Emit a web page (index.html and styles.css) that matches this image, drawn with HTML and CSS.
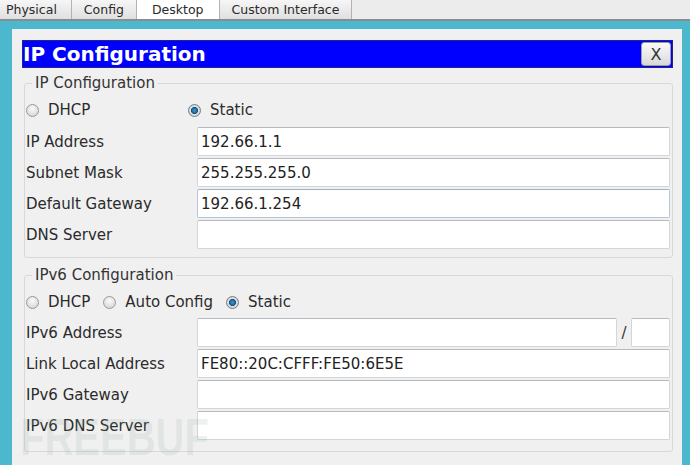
FILE: index.html
```html
<!DOCTYPE html>
<html lang="en">
<head>
  <meta charset="UTF-8">
  <title>IP Configuration</title>
  <link rel="stylesheet" href="styles.css">
</head>
<body>
  <div class="tabs">
    <div class="tab tab-first">Physical</div>
    <div class="tab">Config</div>
    <div class="tab active">Desktop</div>
    <div class="tab">Custom Interface</div>
  </div>

  <div class="panel">
    <div class="title-bar">
      <span class="title">IP Configuration</span>
      <button class="close-btn">X</button>
    </div>

    <!-- IPv4 -->
    <fieldset class="group group-v4">
      <legend>IP Configuration</legend>
      <div class="radio-row wide">
        <label class="radio"><span class="dot"></span>DHCP</label>
        <label class="radio"><span class="dot checked"></span>Static</label>
      </div>
      <div class="field-row">
        <span class="label">IP Address</span>
        <input class="field" type="text" value="192.66.1.1">
      </div>
      <div class="field-row">
        <span class="label">Subnet Mask</span>
        <input class="field" type="text" value="255.255.255.0">
      </div>
      <div class="field-row">
        <span class="label">Default Gateway</span>
        <input class="field focused" type="text" value="192.66.1.254">
      </div>
      <div class="field-row">
        <span class="label">DNS Server</span>
        <input class="field" type="text" value="">
      </div>
    </fieldset>

    <!-- IPv6 -->
    <fieldset class="group group-v6">
      <legend>IPv6 Configuration</legend>
      <div class="radio-row">
        <label class="radio"><span class="dot"></span>DHCP</label>
        <label class="radio"><span class="dot"></span>Auto Config</label>
        <label class="radio"><span class="dot checked"></span>Static</label>
      </div>
      <div class="field-row">
        <span class="label">IPv6 Address</span>
        <input class="field" type="text" value="">
        <span class="slash">/</span>
        <input class="field prefix" type="text" value="">
      </div>
      <div class="field-row">
        <span class="label">Link Local Address</span>
        <input class="field" type="text" value="FE80::20C:CFFF:FE50:6E5E">
      </div>
      <div class="field-row">
        <span class="label">IPv6 Gateway</span>
        <input class="field" type="text" value="">
      </div>
      <div class="field-row">
        <span class="label">IPv6 DNS Server</span>
        <input class="field" type="text" value="">
      </div>
    </fieldset>
  </div>

  <div class="watermark">FREEBUF</div>
</body>
</html>
```

FILE: styles.css
```css
body {
  margin: 0;
  width: 690px;
  height: 465px;
  overflow: hidden;
  position: relative;
  background-color: #4cb8cd;
  font-family: "DejaVu Sans", Verdana, sans-serif;
  color: #2b2b2b;
}

/* Tabs */
.tabs {
  display: flex;
  height: 19px;
  background-color: #ececec;
  border-bottom: 2px solid #8c8c8c;
}

.tab {
  padding: 0 12px;
  font-size: 12.5px;
  line-height: 19px;
  color: #2a2a2a;
  background: linear-gradient(#f6f6f6, #e0e0e0);
  border-right: 1px solid #b3b3b3;
}

.tab-first {
  padding-left: 6px;
  padding-right: 14px;
}

.tab.active {
  background: #fff;
  padding: 0 15px;
}

/* Main panel */
.panel {
  margin: 8px 8px 0 12px;
  height: 436px;
  box-sizing: border-box;
  padding: 11px 9px 0 10px;
  background-color: #f0f0f0;
}

.title-bar {
  display: flex;
  align-items: center;
  justify-content: space-between;
  height: 28px;
  box-sizing: border-box;
  background-color: #0000fe;
  border: 1px solid #23238a;
}

.title {
  color: #fff;
  font-weight: bold;
  font-size: 20px;
  line-height: 26px;
}

.close-btn {
  width: 30px;
  height: 24px;
  margin-right: 1px;
  padding: 0;
  font-family: "DejaVu Sans", sans-serif;
  font-size: 16px;
  color: #333;
  background: linear-gradient(#fbfbfb, #d9d9d9);
  border: 1px solid #9c9c9c;
  border-radius: 3px;
}

/* Group boxes */
.group {
  margin: 6px 0 0 2px;
  min-width: 0;
  border: 1px solid #d8d8d8;
  border-radius: 3px;
  padding: 6px 2px 8px 1px;
}

.group-v6 {
  margin-top: 8px;
  padding-bottom: 11px;
}

.group legend {
  margin-left: 6px;
  padding: 0 3px;
  font-size: 15px;
  line-height: 18px;
  color: #333;
}

.radio-row {
  display: flex;
  align-items: center;
  height: 24px;
  margin-bottom: 5px;
  font-size: 15px;
}

.group-v6 .radio-row {
  margin-bottom: 4px;
}

.radio {
  display: flex;
  align-items: center;
  gap: 9px;
  margin-right: 13px;
}

.radio-row.wide .radio {
  width: 162px;
  margin-right: 0;
}

.dot {
  width: 13px;
  height: 13px;
  box-sizing: border-box;
  border-radius: 50%;
  border: 1px solid #9a9a9a;
  background: radial-gradient(circle at 50% 35%, #fafafa, #cfcfcf);
}

.dot.checked {
  border-color: #6f7d86;
  background: radial-gradient(circle, #3a98d6 0, #1a6aa0 2.5px, #1f4a66 3.3px, #e2e2e2 3.8px, #c4c4c4 100%);
}

/* Rows with inputs */
.field-row {
  display: flex;
  align-items: center;
  margin-top: 2px;
  font-size: 15px;
}

.label {
  width: 171px;
  flex-shrink: 0;
  color: #2b2b2b;
}

.field {
  flex: 1;
  min-width: 0;
  height: 29px;
  box-sizing: border-box;
  padding: 0 3px;
  font-family: "DejaVu Sans", Verdana, sans-serif;
  font-size: 15px;
  color: #222;
  background: #fff;
  border: 1px solid #d3d6d9;
  border-top-color: #b3bac1;
  border-radius: 2px;
  outline: none;
}

.field.focused {
  border-color: #b6c7d9;
  border-top-color: #9fb2c6;
}

.slash {
  width: 14px;
  text-align: center;
  color: #333;
}

.field.prefix {
  flex: 0 0 39px;
}

/* faint stamp over the bottom corner */
.watermark {
  position: absolute;
  left: 20px;
  top: 416px;
  font-family: "Liberation Sans", Arial, sans-serif;
  font-weight: bold;
  font-size: 40px;
  line-height: 32px;
  color: rgba(140, 170, 160, 0.16);
  transform: scaleY(1.3);
  transform-origin: top left;
  pointer-events: none;
}
```
